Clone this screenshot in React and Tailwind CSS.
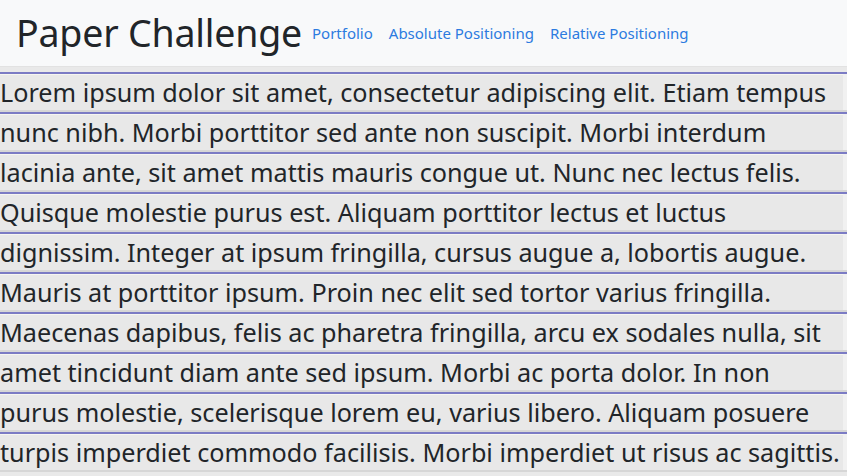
import React from 'react';

const lines = [
  'Lorem ipsum dolor sit amet, consectetur adipiscing elit. Etiam tempus',
  'nunc nibh. Morbi porttitor sed ante non suscipit. Morbi interdum',
  'lacinia ante, sit amet mattis mauris congue ut. Nunc nec lectus felis.',
  'Quisque molestie purus est. Aliquam porttitor lectus et luctus',
  'dignissim. Integer at ipsum fringilla, cursus augue a, lobortis augue.',
  'Mauris at porttitor ipsum. Proin nec elit sed tortor varius fringilla.',
  'Maecenas dapibus, felis ac pharetra fringilla, arcu ex sodales nulla, sit',
  'amet tincidunt diam ante sed ipsum. Morbi ac porta dolor. In non',
  'purus molestie, scelerisque lorem eu, varius libero. Aliquam posuere',
  'turpis imperdiet commodo facilisis. Morbi imperdiet ut risus ac sagittis.',
];

const links = ['Portfolio', 'Absolute Positioning', 'Relative Positioning'];

export default function App() {
  return (
    <div className="min-h-screen bg-[#e9e9e9] font-['Noto_Sans',sans-serif]">
      {/* navbar */}
      <nav className="flex items-center h-[67px] px-4 bg-[#f8f9fa] border-b border-[#e2e2e2]">
        <span className="text-[37.5px] leading-none text-[#212529] mr-[2px] tracking-[-0.2px]">Paper Challenge</span>
        <ul className="flex items-center">
          {links.map((l) => (
            <li key={l}>
              <a href="#" className="block px-2 text-[15px] text-[#2c7be0]">
                {l}
              </a>
            </li>
          ))}
        </ul>
      </nav>

      {/* lined paper */}
      <div className="pt-[5px]">
        {lines.map((t, i) => (
          <div
            key={i}
            className="h-[40px] border-t-2 border-[#7b7bc4] border-b-2 border-b-[#d6d6d6] bg-[#e8e8e8] shadow-[inset_-4px_0_0_#f1f1f1,inset_0_1px_0_#f6f6f0]"
          >
            <p className="whitespace-nowrap text-[25.2px] leading-[36px] text-[#212529]">{t}</p>
          </div>
        ))}
      </div>
    </div>
  );
}
